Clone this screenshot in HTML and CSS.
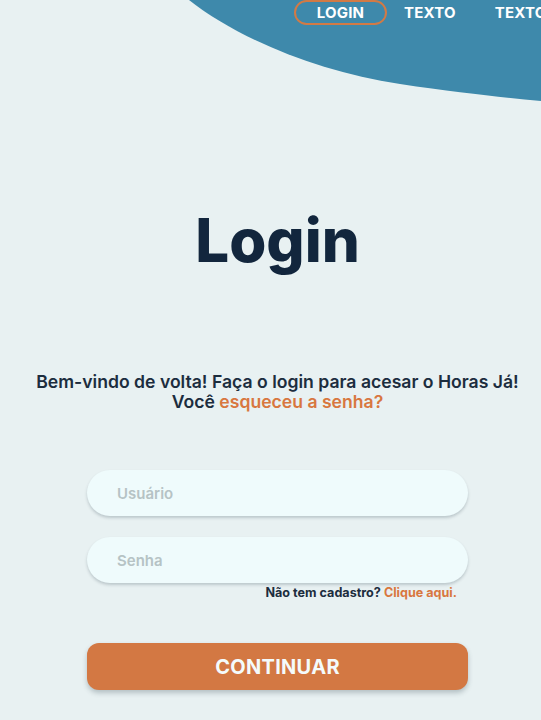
FILE: index.html
```html
<!DOCTYPE html>
<html lang="pt-BR">
<head>
<meta charset="utf-8">
<title>Login</title>
<link rel="stylesheet" href="styles.css">
</head>
<body>
<div class="page">
  <svg class="blob" width="541" height="110" viewBox="0 0 541 110" aria-hidden="true">
    <path d="M189 0 C 240 40, 320 72, 400 84 C 460 93, 500 97, 541 101 L 541 0 Z" fill="#3e89ab"/>
  </svg>
  <nav class="nav">
    <a class="nav-item active">LOGIN</a>
    <a class="nav-item">TEXTO</a>
    <a class="nav-item">TEXTO</a>
  </nav>
  <main class="main">
    <h1 class="title">Login</h1>
    <p class="subtitle">Bem-vindo de volta! Faça o login para acesar o Horas Já!<br>Você <a class="link">esqueceu a senha?</a></p>
    <form class="form">
      <div class="field"><span class="placeholder">Usuário</span></div>
      <div class="field second"><span class="placeholder">Senha</span></div>
      <p class="signup">Não tem cadastro? <a class="link">Clique aqui.</a></p>
      <div class="button">CONTINUAR</div>
    </form>
  </main>
</div>
</body>
</html>
```
FILE: styles.css
```css
* { box-sizing: border-box; }
html, body { margin: 0; padding: 0; }
body {
  background: #e8f1f2;
  font-family: Inter, "Noto Sans", sans-serif;
  overflow: hidden;
  width: 541px;
  height: 720px;
}
.page { position: relative; width: 541px; height: 720px; overflow: hidden; }
.blob { position: absolute; top: 0; left: 0; }
.nav {
  position: relative;
  display: flex;
  align-items: center;
  height: 25px;
  padding-left: 294px;
  white-space: nowrap;
}
.nav-item {
  flex-shrink: 0;
  color: #ffffff;
  font-weight: 700;
  font-size: 15px;
  letter-spacing: 0.2px;
}
.nav-item.active {
  width: 93px;
  height: 25px;
  border: 2px solid #d27a45;
  border-radius: 13px;
  display: flex;
  align-items: center;
  justify-content: center;
  margin-right: 17px;
}
.nav-item + .nav-item + .nav-item { margin-left: 39px; }
.main {
  position: relative;
  display: flex;
  flex-direction: column;
  align-items: center;
  padding-left: 14px;
}
.title {
  margin: 179px 0 0;
  font-size: 60px;
  line-height: 72px;
  font-weight: 800;
  color: #12263d;
}
.subtitle {
  margin: 96px 0 0;
  text-align: center;
  font-size: 17.6px;
  line-height: 20px;
  font-weight: 600;
  color: #1c2d3e;
  white-space: nowrap;
}
.link { color: #d8773f; }
.form { width: 381px; margin-top: 58px; display: flex; flex-direction: column; }
.field {
  height: 46px;
  border-radius: 23px;
  background: #effbfc;
  box-shadow: 0 2px 3px rgba(60, 80, 90, 0.25);
  display: flex;
  align-items: center;
  padding-left: 30px;
}
.field.second { margin-top: 21px; }
.placeholder { color: #b6c3c5; font-size: 15px; font-weight: 600; }
.signup {
  margin: 2px 11px 0 0;
  text-align: right;
  font-size: 12.6px;
  line-height: 16px;
  font-weight: 700;
  color: #1c2d3e;
}
.button {
  margin-top: 42px;
  height: 47px;
  border-radius: 12px;
  background: #d37843;
  box-shadow: 0 3px 5px rgba(60, 80, 90, 0.3);
  display: flex;
  align-items: center;
  justify-content: center;
  color: #f4fbfc;
  font-size: 20px;
  font-weight: 700;
  letter-spacing: 0.3px;
}
```
